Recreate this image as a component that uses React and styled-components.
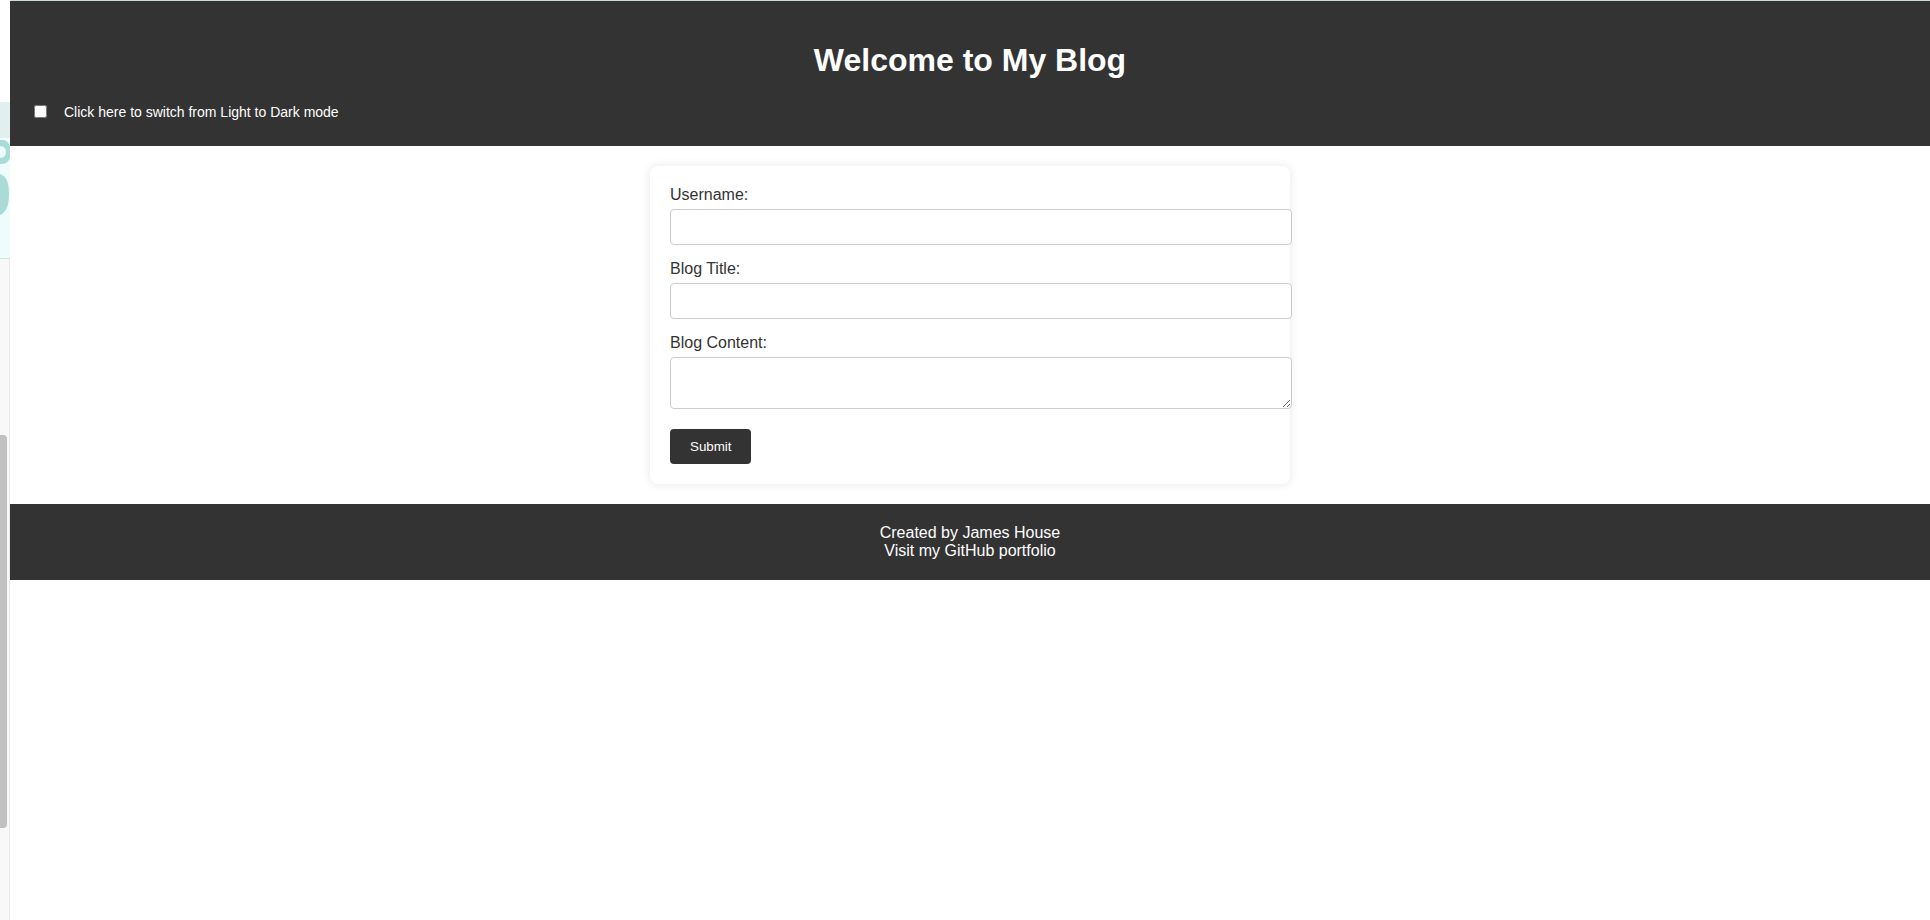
import React, { useState } from "react";
import styled, { createGlobalStyle } from "styled-components";

// ================== Global ==================
const GlobalStyle = createGlobalStyle`
  html, body {
    margin: 0;
    padding: 0;
    background-color: #ffffff;
    font-family: "Liberation Sans", Arial, sans-serif;
  }
`;

// ================== Layout ==================
const Page = styled.div`
  display: grid;
  grid-template-columns: 10px 1fr;
  min-height: 100vh;
`;

// the thin slice of the neighbouring window on the left edge
const SideStrip = styled.aside`
  display: flex;
  flex-direction: column;
  overflow: hidden;
`;

const StripTop = styled.div`
  height: 102px;
  background-color: #ffffff;
`;

const StripBanner = styled.div`
  height: 156px;
  background-color: #eefcfb;
  border-bottom: 1px solid #d6e3e2;

  svg {
    display: block;
  }
`;

const StripBody = styled.div`
  flex: 1;
  background-color: #f8f8f8;
  border-right: 1px solid #e8e8e8;
`;

const ScrollThumb = styled.div`
  width: 7px;
  height: 393px;
  margin-top: 176px;
  background-color: #c1c1c1;
  border-radius: 0 4px 4px 0;
`;

const Main = styled.div`
  display: flex;
  flex-direction: column;
  border-top: 1px solid #c3dedb;
  background-color: #ffffff;
`;

// ================== Header ==================
const Header = styled.header`
  background-color: #333333;
  color: #ffffff;
  padding: 20px;
`;

const Title = styled.h1`
  margin: 0.67em 0;
  font-size: 32px;
  font-weight: 700;
  text-align: center;
`;

const ModeRow = styled.div`
  display: flex;
  align-items: center;
  height: 22px;
  padding-bottom: 3px;
  font-size: 14px;

  input {
    width: 13px;
    height: 13px;
    margin: 0 3px 0 4px;
  }
`;

const ModeLabel = styled.label`
  margin-left: 14px;
  cursor: pointer;
`;

// ================== Form ==================
const Content = styled.main`
  padding: 20px 0;
  display: flex;
  justify-content: center;
`;

const Card = styled.form`
  width: 600px;
  padding: 20px;
  background-color: #ffffff;
  border-radius: 8px;
  box-shadow: 0 0 10px rgba(0, 0, 0, 0.1);
`;

const Label = styled.label`
  display: block;
  color: #333333;
  font-size: 16px;
  margin-bottom: 5px;
`;

const TextInput = styled.input`
  display: block;
  width: 100%;
  padding: 8px 10px;
  margin: 0 0 15px;
  font-family: inherit;
  font-size: 16px;
  border: 1px solid #cccccc;
  border-radius: 4px;
  background-color: #ffffff;
`;

const TextArea = styled.textarea`
  display: block;
  width: 100%;
  height: 34px;
  padding: 8px 10px;
  margin: 0 0 20px;
  font-family: inherit;
  font-size: 16px;
  border: 1px solid #cccccc;
  border-radius: 4px;
  background-color: #ffffff;
`;

const SubmitButton = styled.button`
  display: block;
  padding: 10px 20px;
  border: none;
  border-radius: 4px;
  background-color: #333333;
  color: #ffffff;
  font-family: inherit;
  font-size: 13.333px;
  line-height: 15px;
  cursor: pointer;
`;

// ================== Footer ==================
const Footer = styled.footer`
  background-color: #333333;
  color: #ffffff;
  padding: 20px;
  text-align: center;
  font-size: 16px;
  line-height: 18px;
`;

const FooterLine = styled.div``;

const FooterLink = styled.a`
  color: #ffffff;
  text-decoration: none;
`;

// ================== Component ==================
const App = () => {
  const [dark, setDark] = useState(false);
  const [username, setUsername] = useState("");
  const [title, setTitle] = useState("");
  const [content, setContent] = useState("");

  const handleSubmit = (e) => {
    e.preventDefault();
  };

  return (
    <>
      <GlobalStyle />
      <Page>
        <SideStrip>
          <StripTop />
          <StripBanner>
            <svg width="10" height="156" viewBox="0 0 10 156">
              <rect x="0" y="0" width="10" height="36" fill="#e1efef" />
              <path
                d="M0 38 H2 C8 38 11 44 11 50 C11 56 8 62 2 62 H0 Z"
                fill="#a9dcd7"
              />
              <path
                d="M0 44 C4 44 6 47 6 50 C6 53 4 56 0 56 Z"
                fill="#eefcfb"
              />
              <path
                d="M0 72 C6 74 9 80 9 92 C9 104 6 110 0 113 Z"
                fill="#a9dcd7"
              />
            </svg>
          </StripBanner>
          <StripBody>
            <ScrollThumb />
          </StripBody>
        </SideStrip>

        <Main>
          <Header>
            <Title>Welcome to My Blog</Title>
            <ModeRow>
              <input
                id="mode"
                type="checkbox"
                checked={dark}
                onChange={() => setDark(!dark)}
              />
              <ModeLabel htmlFor="mode">
                Click here to switch from Light to Dark mode
              </ModeLabel>
            </ModeRow>
          </Header>

          <Content>
            <Card onSubmit={handleSubmit}>
              <Label htmlFor="username">Username:</Label>
              <TextInput
                id="username"
                type="text"
                value={username}
                onChange={(e) => setUsername(e.target.value)}
              />
              <Label htmlFor="title">Blog Title:</Label>
              <TextInput
                id="title"
                type="text"
                value={title}
                onChange={(e) => setTitle(e.target.value)}
              />
              <Label htmlFor="content">Blog Content:</Label>
              <TextArea
                id="content"
                value={content}
                onChange={(e) => setContent(e.target.value)}
              />
              <SubmitButton type="submit">Submit</SubmitButton>
            </Card>
          </Content>

          <Footer>
            <FooterLine>Created by James House</FooterLine>
            <FooterLine>
              <FooterLink href="#">Visit my GitHub portfolio</FooterLink>
            </FooterLine>
          </Footer>
        </Main>
      </Page>
    </>
  );
};

export default App;
